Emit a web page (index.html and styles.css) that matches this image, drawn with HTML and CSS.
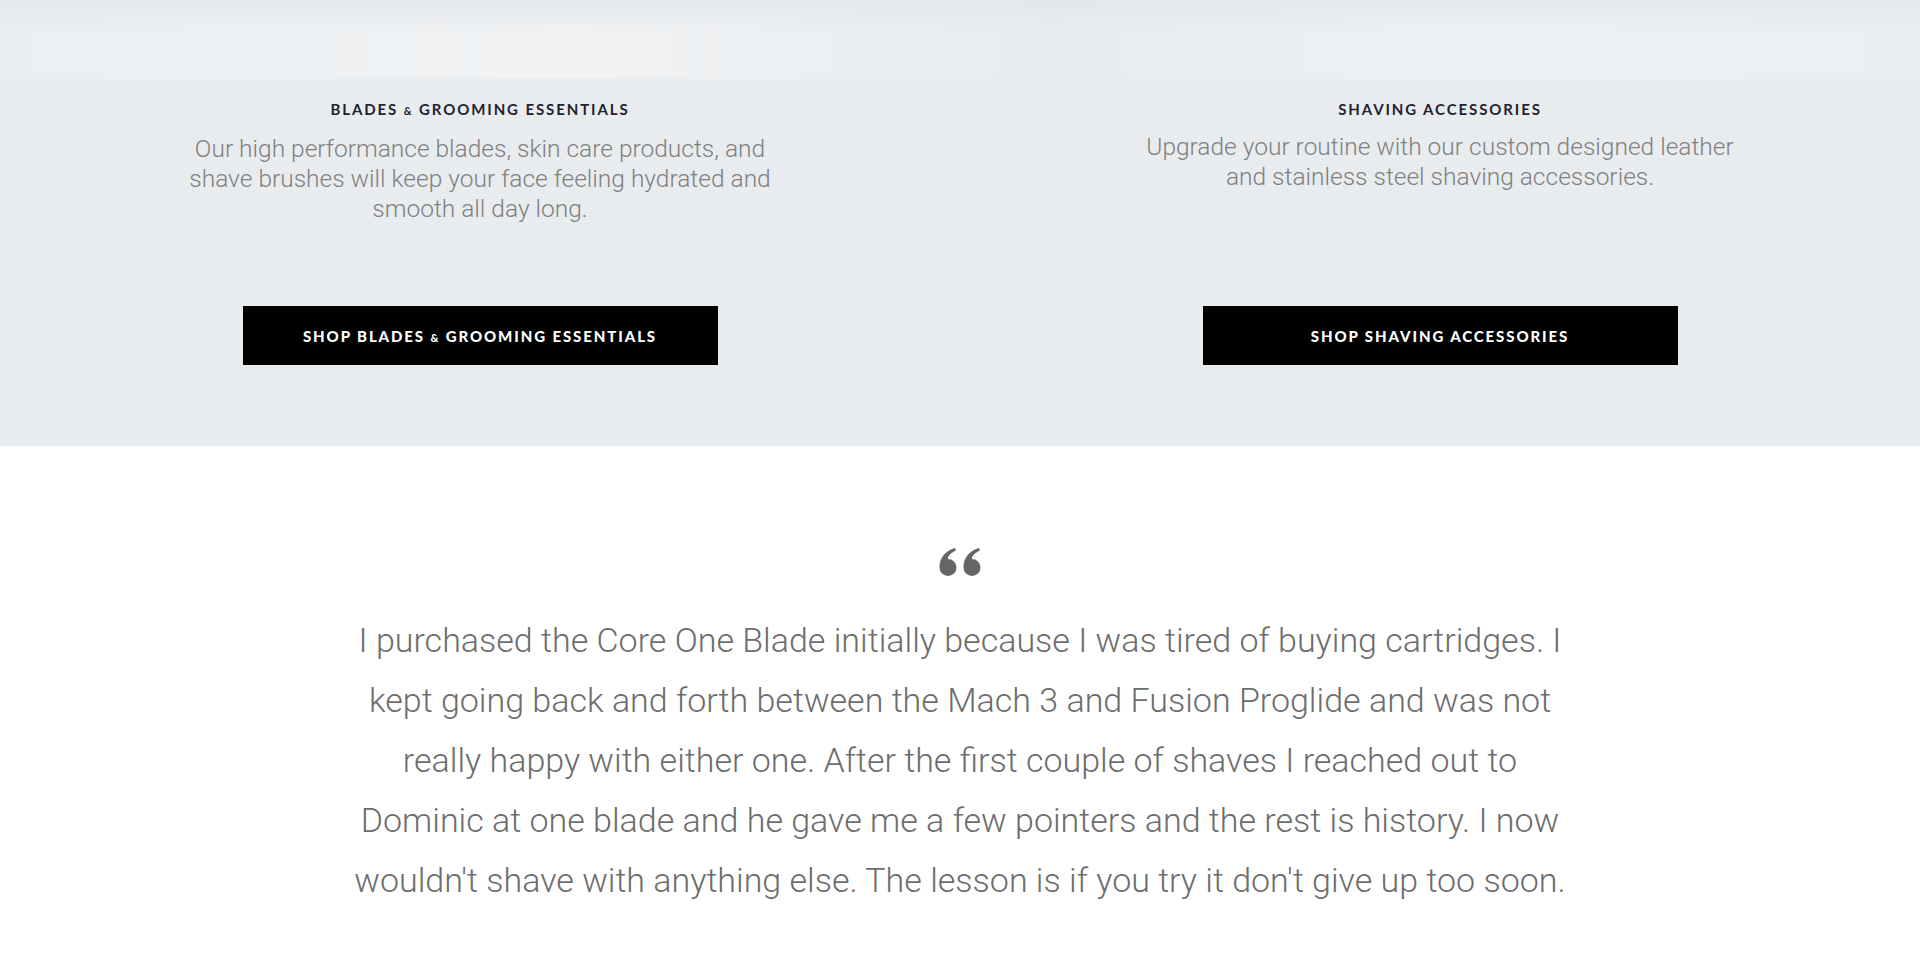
FILE: index.html
```html
<!DOCTYPE html>
<html lang="en">
<head>
<meta charset="utf-8">
<title>OneBlade – Shop</title>
<link rel="stylesheet" href="styles.css">
</head>
<body>
  <div class="hero-strip"></div>

  <section class="categories">
    <div class="category">
      <h3 class="category-title">Blades <span class="amp">&amp;</span> Grooming Essentials</h3>
      <p class="category-text">Our high performance blades, skin care products, and shave brushes will keep your face feeling hydrated and smooth all day long.</p>
      <a class="btn" href="#"><span class="btn-label">Shop Blades <span class="amp">&amp;</span> Grooming Essentials</span></a>
    </div>
    <div class="category">
      <h3 class="category-title">Shaving Accessories</h3>
      <p class="category-text">Upgrade your routine with our custom designed leather and stainless steel shaving accessories.</p>
      <a class="btn" href="#"><span class="btn-label">Shop Shaving Accessories</span></a>
    </div>
  </section>

  <section class="testimonial">
    <svg class="quote-mark" viewBox="0 0 46 28" width="46" height="28" aria-hidden="true">
      <path d="M9 28 A8.5 8.5 0 0 1 0.5 19.5 C0.5 10 6 3 16 0 L17 2.5 C11 5.5 8.5 8.5 9 11 A8.5 8.5 0 0 1 9 28 Z"/>
      <path transform="translate(24 0)" d="M9 28 A8.5 8.5 0 0 1 0.5 19.5 C0.5 10 6 3 16 0 L17 2.5 C11 5.5 8.5 8.5 9 11 A8.5 8.5 0 0 1 9 28 Z"/>
    </svg>
    <blockquote class="quote-text">I purchased the Core One Blade initially because I was tired of buying cartridges. I kept going back and forth between the Mach 3 and Fusion Proglide and was not really happy with either one. After the first couple of shaves I reached out to Dominic at one blade and he gave me a few pointers and the rest is history. I now wouldn't shave with anything else. The lesson is if you try it don't give up too soon.</blockquote>
  </section>
</body>
</html>
```
FILE: styles.css
```css
* { box-sizing: border-box; }

html, body {
  margin: 0;
  padding: 0;
  background: #ffffff;
}

body {
  font-family: Roboto, "Noto Sans", sans-serif;
  overflow: hidden;
}

.hero-strip {
  height: 79px;
  background:
    linear-gradient(180deg, rgba(228,231,234,0.9) 0%, rgba(238,241,243,0) 40%),
    linear-gradient(90deg, #eceff1 0%, #f0f2f4 30%, #e9ecee 55%, #eef1f4 75%, #eceff2 100%);
}

.categories {
  display: grid;
  grid-template-columns: 1fr 1fr;
  background: #e9ecef;
  padding: 20px 0 81px;
}

.category {
  display: flex;
  flex-direction: column;
  align-items: center;
  text-align: center;
}

.category-title {
  margin: 0;
  font-family: Lato, "Noto Sans", sans-serif;
  font-weight: 700;
  font-size: 15px;
  line-height: 20px;
  letter-spacing: 1.9px;
  text-transform: uppercase;
  color: #23222f;
}

.amp {
  font-size: 0.72em;
}

.category-text {
  margin: 13px 0 0;
  max-width: 600px;
  font-weight: 300;
  font-size: 24.5px;
  line-height: 30px;
  color: #808080;
}

.btn {
  margin-top: auto;
  display: flex;
  align-items: center;
  justify-content: center;
  width: 475px;
  height: 59px;
  background: #000;
  color: #fff;
  text-decoration: none;
  text-transform: uppercase;
  font-family: Lato, "Noto Sans", sans-serif;
  font-weight: 900;
  font-size: 15px;
  letter-spacing: 1.9px;
}

.category:first-child .category-text {
  margin-bottom: 82px;
}

.testimonial {
  display: flex;
  flex-direction: column;
  align-items: center;
  padding: 102px 0 0;
}

.quote-mark {
  display: block;
  margin-left: 3px;
  fill: #666666;
}

.quote-text {
  margin: 34px 0 0;
  max-width: 1225px;
  text-align: center;
  font-weight: 300;
  font-size: 34px;
  line-height: 60px;
  color: #6d6d6d;
}
```
